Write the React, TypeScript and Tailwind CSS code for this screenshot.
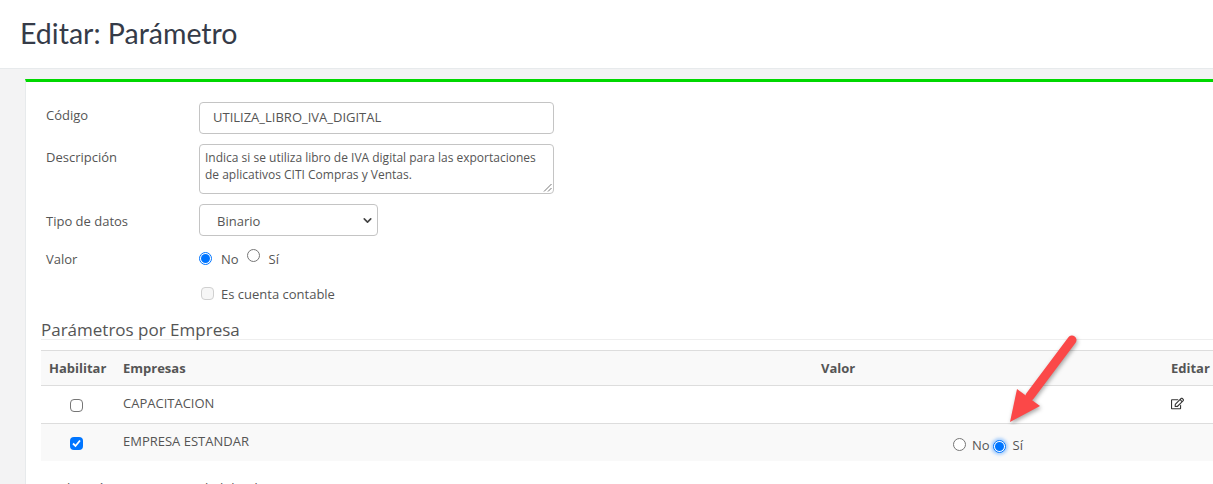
import { ChevronDown } from 'lucide-react';
import { FaRegEdit } from 'react-icons/fa';

// Native radio look, drawn with borders so it keeps its size
function Radio({ checked = false, glow = false }: { checked?: boolean; glow?: boolean }) {
  return (
    <span
      className={`inline-flex h-[13px] w-[13px] shrink-0 items-center justify-center rounded-full border bg-white ${
        checked ? 'border-[#0075ff]' : 'border-[#767676]'
      } ${glow ? 'shadow-[0_0_3px_2px_rgba(80,160,255,0.45)]' : ''}`}
    >
      {checked && <span className="h-[9px] w-[9px] rounded-full bg-[#0075ff]" />}
    </span>
  );
}

function Row({ label, className, labelClass = '', children }: { label: string; className: string; labelClass?: string; children: React.ReactNode }) {
  return (
    <div className={`flex ${className}`}>
      <label className={`w-[153px] shrink-0 text-[13px] leading-[18px] text-[#555] ${labelClass}`}>{label}</label>
      {children}
    </div>
  );
}

export default function App() {
  return (
    <div className="relative h-[484px] w-[1213px] overflow-hidden bg-[#f3f3f4] font-['Open_Sans',sans-serif] text-[#555]">
      {/* Page heading */}
      <div className="flex h-[69px] items-center border-b border-[#e7eaec] bg-white pb-[2px] pl-[20px]">
        <h2 className="font-['Lato',sans-serif] text-[28.5px] font-normal leading-none text-[#353b48]">Editar: Parámetro</h2>
      </div>

      {/* Main card */}
      <div className="ml-[25px] mt-[10px] h-[405px] border-l border-t-[3px] border-l-[#e7eaec] border-t-[#00d800] bg-white pl-[15px]">
        <div className="pl-[5px] pt-[20px]">
          <Row label="Código" className="h-[42px]" labelClass="mt-[4px]">
            <div className="flex h-[32px] w-[355px] items-center rounded border border-[#c4c4c4] pl-[13px] text-[13px] text-[#555]">
              UTILIZA_LIBRO_IVA_DIGITAL
            </div>
          </Row>
          <Row label="Descripción" className="h-[60px]" labelClass="mt-[4px]">
            <div className="relative h-[50px] w-[355px] rounded border border-[#c4c4c4] pl-[5px] pt-[4px] text-[12px] leading-[17px] text-[#555]">
              Indica si se utiliza libro de IVA digital para las exportaciones
              <br />
              de aplicativos CITI Compras y Ventas.
              <svg className="absolute bottom-[1px] right-[1px]" width="9" height="9" viewBox="0 0 9 9" fill="none" stroke="#777">
                <path d="M1 8.5L8.5 1M5 8.5L8.5 5" />
              </svg>
            </div>
          </Row>
          <Row label="Tipo de datos" className="h-[44px] items-start" labelClass="mt-[8px]">
            <div className="flex h-[32px] w-[179px] items-center justify-between rounded border border-[#c4c4c4] pl-[17px] pr-[3px] text-[13px] text-[#555]">
              <span className="mt-[3px]">Binario</span>
              <ChevronDown size={13} strokeWidth={3} className="text-[#444]" />
            </div>
          </Row>
          <Row label="Valor" className="h-[36px]" labelClass="mt-[2px]">
            <div className="flex items-start text-[13px] leading-[18px]">
              <span className="mt-[1px]"><Radio checked /></span>
              <span className="ml-[9px] mt-[2px]">No</span>
              <span className="ml-[8px]"><Radio /></span>
              <span className="ml-[9px] mt-[2px]">Sí</span>
            </div>
          </Row>
          <Row label="" className="h-[26px]">
            <span className="ml-[2px] mt-[3px] h-[13px] w-[13px] rounded-sm border border-[#d0d0d0] bg-[#f6f6f6]" />
            <span className="ml-[7px] mt-[1px] text-[13px] leading-[18px]">Es cuenta contable</span>
          </Row>
        </div>

        {/* Parametros por empresa */}
        <h4 className="mt-[1px] h-[29px] border-b border-[#eee] pt-[7px] text-[17px] leading-[24px] text-[#555]">Parámetros por Empresa</h4>
        <div className="mt-[10px] flex h-[36px] items-center border-y border-[#ddd] bg-[#f9f9f9] pt-[2px] text-[13px] font-bold">
          <span className="w-[82px] pl-[8px]">Habilitar</span>
          <span className="w-[698px]">Empresas</span>
          <span className="w-[350px]">Valor</span>
          <span>Editar</span>
        </div>
        <div className="flex h-[38px] border-b border-[#ddd]">
          <span className="flex w-[82px] justify-center pr-[11px] pt-[13px]">
            <span className="h-[13px] w-[13px] rounded-sm border border-[#767676] bg-white" />
          </span>
          <span className="w-[1048px] pt-[8px] text-[13px] leading-[18px]">CAPACITACION</span>
          <FaRegEdit size={13} className="mt-[11px] text-[#333]" />
        </div>
        <div className="flex h-[37px] bg-[#f9f9f9]">
          <span className="flex w-[82px] justify-center pr-[11px] pt-[13px]">
            <span className="flex h-[13px] w-[13px] items-center justify-center rounded-sm bg-[#0075ff]">
              <svg width="9" height="9" viewBox="0 0 9 9" fill="none" stroke="white" strokeWidth="1.8">
                <path d="M1 4.5L3.5 7L8 1.5" />
              </svg>
            </span>
          </span>
          <span className="w-[830px] pt-[8px] text-[13px] leading-[18px]">EMPRESA ESTANDAR</span>
          <div className="flex items-start pt-[14px] text-[13px] leading-[16px]">
            <Radio />
            <span className="ml-[6px] -mt-[1px]">No</span>
            <span className="ml-[3px]"><Radio checked glow /></span>
            <span className="ml-[7px] -mt-[1px]">Sí</span>
          </div>
        </div>
        <p className="mt-[18px] pl-[11px] text-[13px] leading-[18px] text-[#555]">Valor "Sí" para empresas habilitadas</p>
      </div>

      {/* Red annotation arrow */}
      <svg className="absolute left-[1000px] top-[330px]" width="85" height="95" viewBox="0 0 85 95" fill="none">
        <g style={{ filter: 'drop-shadow(1px 2px 2px rgba(0,0,0,0.35))' }}>
          <path d="M72 10L30 66" stroke="#fb4848" strokeWidth="9" strokeLinecap="round" />
          <path d="M10 92L17 59L40 76z" fill="#fb4848" />
        </g>
      </svg>
    </div>
  );
}
